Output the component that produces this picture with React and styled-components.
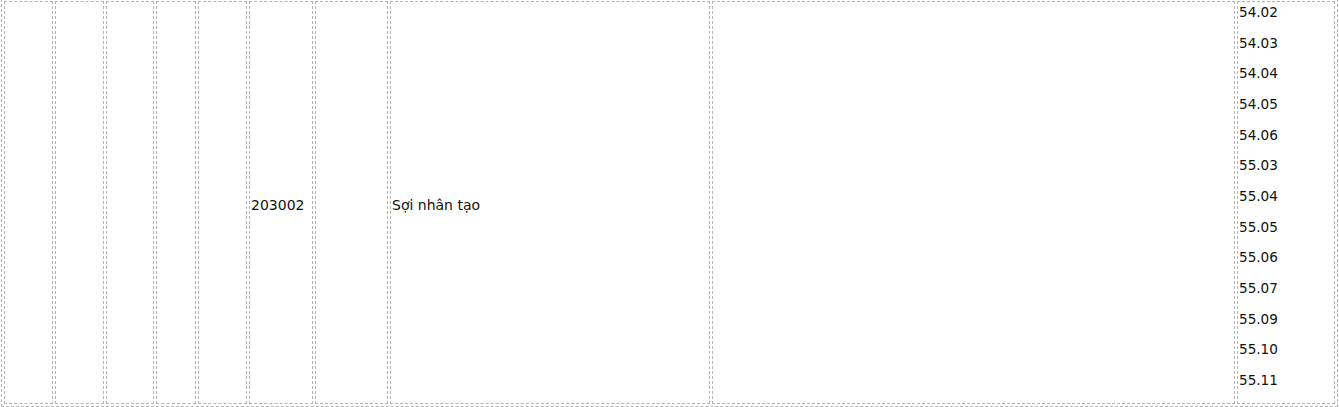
import React from 'react';
import styled, { createGlobalStyle } from 'styled-components';

const GlobalStyle = createGlobalStyle`
  html, body {
    margin: 0;
    padding: 0;
    background: #ffffff;
    overflow: hidden;
  }
  body {
    font-family: "DejaVu Sans", Verdana, sans-serif;
    font-size: 13px;
    color: #111111;
  }
`;

const Wrap = styled.div`
  padding-left: 1px;
`;

const Table = styled.table`
  width: 1337px;
  table-layout: fixed;
  border-collapse: separate;
  border-spacing: 2px;
  border: 1px dashed #b4b4b4;
  border-top: 0;
  margin-top: -1px;
`;

const Cell = styled.td`
  border: 1px dashed #b4b4b4;
  padding: ${({ $top }) => ($top ? '0 0 0 1px' : '5px 0 0 1px')};
  vertical-align: ${({ $top }) => ($top ? 'top' : 'middle')};
  font-size: ${({ $top }) => ($top ? '13.6px' : '14px')};
  line-height: 16px;
  white-space: nowrap;
`;

const Codes = styled.div`
  padding-top: 2px;
`;

const Code = styled.div`
  line-height: 16px;
  margin-bottom: 14.67px;
`;

const widths = [49, 49, 48, 40, 49, 64, 73, 320, 523, 98];

const codes = [
  '54.02', '54.03', '54.04', '54.05', '54.06',
  '55.03', '55.04', '55.05', '55.06', '55.07',
  '55.09', '55.10', '55.11',
];

export default function App() {
  return (
    <Wrap>
      <GlobalStyle />
      <Table>
        <colgroup>
          {widths.map((w, i) => (
            <col key={i} style={{ width: w }} />
          ))}
        </colgroup>
        <tbody>
          <tr>
            <Cell />
            <Cell />
            <Cell />
            <Cell />
            <Cell />
            <Cell>203002</Cell>
            <Cell />
            <Cell>Sợi nhân tạo</Cell>
            <Cell />
            <Cell $top>
              <Codes>
                {codes.map((c) => (
                  <Code key={c}>{c}</Code>
                ))}
              </Codes>
            </Cell>
          </tr>
        </tbody>
      </Table>
    </Wrap>
  );
}
